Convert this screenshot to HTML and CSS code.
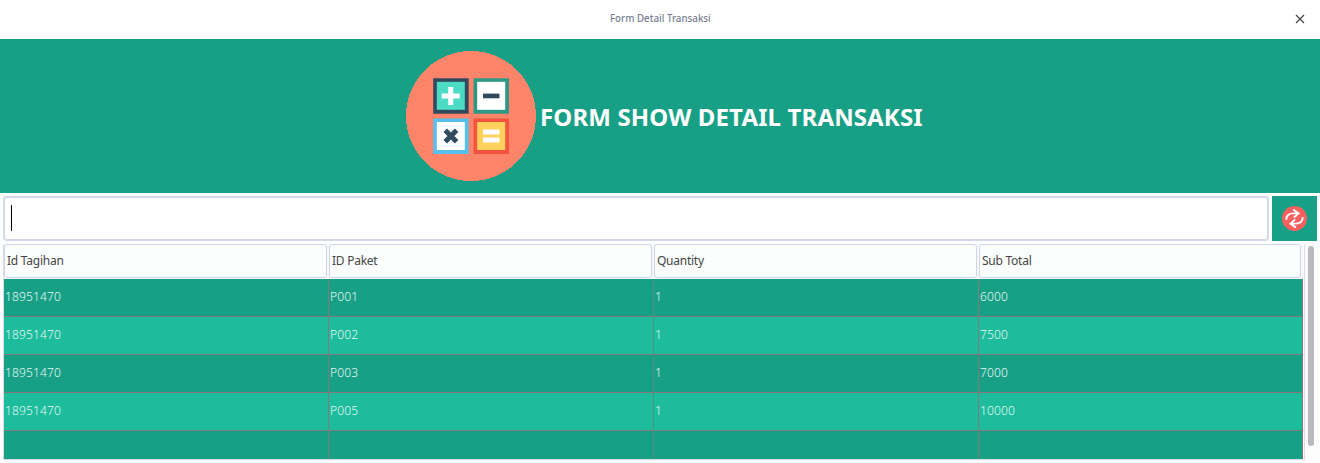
FILE: index.html
```html
<!DOCTYPE html>
<html lang="id">
<head>
<meta charset="utf-8">
<title>Form Detail Transaksi</title>
<link rel="stylesheet" href="styles.css">
</head>
<body>
<div class="window">
  <header class="titlebar">
    <span class="title">Form Detail Transaksi</span>
    <svg class="close" width="10" height="10" viewBox="0 0 10 10"><path d="M1 1L9 9M9 1L1 9" stroke="#444" stroke-width="1.2"/></svg>
  </header>
  <section class="banner">
    <svg class="logo" width="130" height="130" viewBox="0 0 130 130">
      <circle cx="65" cy="65" r="65" fill="#ff8469" shape-rendering="crispEdges"/>
      <path fill="#324a5e" d="M27.2 27.2h35.5v35.5H27.2z"/><path fill="#4cdbc4" d="M30.8 30.8h28v28h-28z"/>
      <path fill="#fff" d="M42.2 36h5v6.5h6.5v5h-6.5V54h-5v-6.5h-6.5v-5h6.5z"/>
      <path fill="#2c9984" d="M67.5 27.2H103v35.5H67.5z"/><path fill="#fff" d="M71.2 30.8h28v28h-28z"/>
      <path fill="#324a5e" d="M77 42.6h16.5v4.7H77z"/>
      <path fill="#54c0eb" d="M27.2 67.4h35.5v35.5H27.2z"/><path fill="#fff" d="M30.8 71h28v28h-28z"/>
      <path stroke="#324a5e" stroke-width="5" d="M39.2 79.3l11.4 11.4M50.6 79.3L39.2 90.7"/>
      <path fill="#f1543f" d="M67.5 67.4H103v35.5H67.5z"/><path fill="#ffd05b" d="M71.2 71h28v28h-28z"/>
      <path fill="#fff" d="M77 78.5h16.6v5H77zM77 86.5h16.6v5H77z"/>
    </svg>
    <h1 class="heading">FORM SHOW DETAIL TRANSAKSI</h1>
  </section>
  <div class="search">
    <div class="field"><span class="caret"></span></div>
    <div class="refresh">
      <svg width="25" height="25" viewBox="0 0 25 25">
        <circle cx="12.5" cy="12.5" r="12.5" fill="#f86060"/>
        <g fill="none" stroke="#fff" stroke-width="1.9">
          <path d="M4.3 13.8C4 9.5 7.2 7.4 11 7.4h5.3M11.2 3.4L16.5 7.4l-4.7 4.2"/>
          <path d="M20.7 11.2c.3 4.3-2.9 6.4-6.7 6.4H8.7M13.8 21.6L8.5 17.6l4.7-4.2"/>
        </g>
      </svg>
    </div>
  </div>
  <div class="scrollpane">
    <div class="table">
      <div class="row head"><span>Id Tagihan</span><span>ID Paket</span><span>Quantity</span><span>Sub Total</span></div>
      <div class="row"><span>18951470</span><span>P001</span><span>1</span><span>6000</span></div>
      <div class="row alt"><span>18951470</span><span>P002</span><span>1</span><span>7500</span></div>
      <div class="row"><span>18951470</span><span>P003</span><span>1</span><span>7000</span></div>
      <div class="row alt"><span>18951470</span><span>P005</span><span>1</span><span>10000</span></div>
      <div class="row last"><span></span><span></span><span></span><span></span></div>
    </div>
    <div class="track"><div class="thumb"></div></div>
  </div>
</div>
</body>
</html>
```
FILE: styles.css
```css
* { box-sizing: border-box; }
body { margin: 0; background: #fcfcfd; font-family: "Noto Sans", sans-serif; }
.window { width: 1320px; height: 463px; overflow: hidden; background: #fdfdfe; display: flex; flex-direction: column; }
.titlebar { height: 39px; flex: none; background: #fff; display: grid; grid-template-columns: 1fr auto 1fr; align-items: center; padding: 0 15px 1px; }
.title { grid-column: 2; font-size: 11.5px; line-height: 16px; font-weight: 500; color: #787e92; padding-bottom: 2px; transform: scaleX(.85); }
.close { justify-self: end; }
.banner { height: 154px; flex: none; background: #18a086; display: flex; align-items: center; padding-left: 406px; gap: 4px; }
.heading { margin: 0; font-size: 24px; line-height: 34px; font-weight: 700; letter-spacing: .13px; color: #fff; padding-top: 2px; white-space: nowrap; }
.search { height: 51px; flex: none; display: flex; gap: 3px; padding: 3px; }
.field { width: 1266px; height: 45px; border: 2px solid #d3d9e9; border-radius: 4px; background: #fff; padding: 7px 6px; }
.caret { display: block; width: 1px; height: 26px; background: #000; }
.refresh { width: 45px; height: 45px; background: #18a086; display: flex; align-items: center; justify-content: center; }
.refresh svg { display: block; }
.scrollpane { display: flex; height: 216px; padding-left: 3px; }
.table { width: 1300px; flex: none; border-left: 1px solid #d9dce4; border-bottom: 1px solid #d9dce4; }
.row { display: grid; grid-template-columns: 325px 325px 325px 324px; height: 38px; background: #18a086; color: #e6f7f3; font-size: 12px; font-weight: 300; letter-spacing: .14px; line-height: 36px; }
.row span { border-right: 1px solid #86787a; border-bottom: 1px solid #86787a; padding-left: 1px; white-space: nowrap; }
.row span:nth-child(2) { border-right-color: #4a917f; }
.row.alt { background: #1cbc9c; }
.row.last { height: 28px; }
.last span { border-bottom: 0; }
.row.head { height: 35px; background: #f7f8fb; color: #444; column-gap: 2px; grid-template-columns: 323px 323px 323px 322px; padding-bottom: 1px; font-weight: 400; letter-spacing: -.25px; line-height: 31px; }
.head span, .head span:nth-child(2) { border: 1px solid #cfd5e7; border-radius: 3px; background: #fcfefe; padding-left: 2px; }
.track { width: 16px; margin-left: 1px; border-left: 1px solid #d9dce4; padding: 2px 0 0 3px; }
.thumb { width: 6px; height: 200px; border-radius: 3px; background: #b8b8be; }
```
